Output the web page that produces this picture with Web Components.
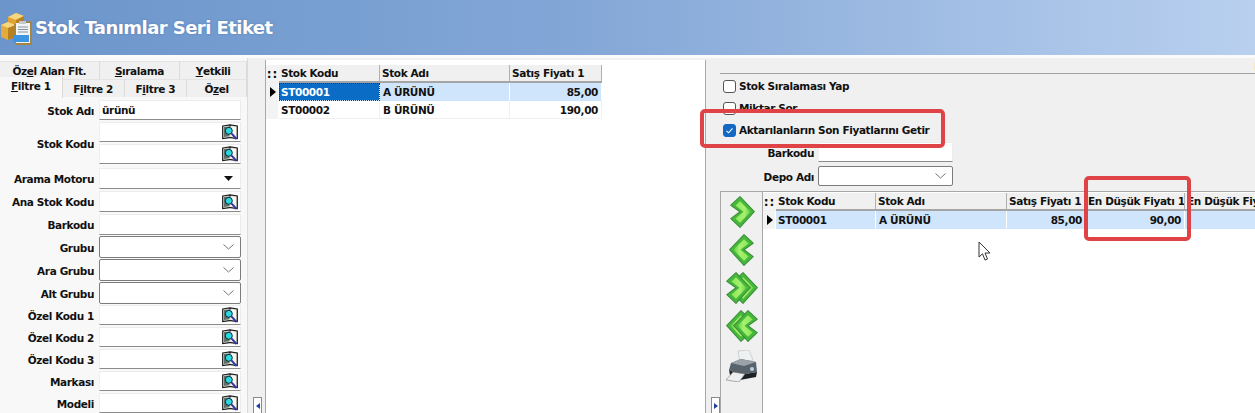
<!DOCTYPE html>
<html lang="tr">
<head>
<meta charset="utf-8">
<title>Stok Tanımlar Seri Etiket</title>
<style>
  html, body { margin: 0; height: 413px; overflow: hidden; background: #f0f0f0; }
  body {
    font: bold 10.5px "DejaVu Sans", sans-serif;
    letter-spacing: -0.38px;
    color: #111;
    display: flex;
    flex-direction: column;
    position: relative;
  }
</style>
</head>
<body>
<title-bar>Stok Tanımlar Seri Etiket</title-bar>
<main-layout>
  <filter-panel slot="left"></filter-panel>
  <data-grid slot="middle" marker="13" cols="101 130 92"
    heads="Stok Kodu|Stok Adı|Satış Fiyatı 1"
    rows="ST00001|A ÜRÜNÜ|85,00;ST00002|B ÜRÜNÜ|190,00"
    num="2" focus></data-grid>
  <transfer-panel slot="right"></transfer-panel>
</main-layout>
<red-frame style="left:700px;top:109px;width:245px;height:39px"></red-frame>
<red-frame style="left:1084px;top:176px;width:107px;height:65px"></red-frame>
<mouse-pointer style="left:978px;top:241px"></mouse-pointer>

<script>
const lookupIcon = `<svg width="16" height="16" viewBox="0 0 16 16">
  <path d="M.7 2 L7.5 1 L8 2 L8.5 1 L15.3 2 V14.6 L8.5 13.6 H7.5 L.7 14.6 Z" fill="#e4e4dc" stroke="#1a1a1a" stroke-width="1.2"/>
  <path d="M2 3 L7.4 2.4 V12.2 L2 13 Z" fill="#5f6f68"/>
  <path d="M14 3.2 L9 2.5 V12.2 L14 13 Z" fill="#f6f6f0"/>
  <circle cx="6.8" cy="6.8" r="3.5" fill="#2bd8e0" stroke="#0e2a3a" stroke-width="1"/>
  <path d="M9.4 9.4 L14.5 15" stroke="#3535a5" stroke-width="2"/>
</svg>`;

class TitleBar extends HTMLElement {
  constructor() {
    super();
    this.attachShadow({ mode: 'open' }).innerHTML = `<style>
      :host {
        display: flex;
        align-items: center;
        flex: none;
        height: 55px;
        padding-left: 1px;
        gap: 3px;
        background: linear-gradient(90deg, #6b95cb 0%, #82a6d6 45%, #b9d0ef 100%);
        border-bottom: 3px solid #fbfbfb;
      }
      .name {
        font: bold 18px "DejaVu Sans", sans-serif;
        letter-spacing: -0.55px;
        color: #fff;
        margin-top: -1px;
        text-shadow: 0 0 2px rgba(60,90,140,.5);
      }
      svg { margin-top: 2px; }
    </style>
    <svg width="31" height="32" viewBox="0 0 31 32">
      <path d="M7 4 L15 0 L23 3 V15 L14 19 L7 15 Z" fill="#dfa233"/>
      <path d="M7 4 L15 0 L23 3 L15 7 Z" fill="#f6d67e"/>
      <path d="M15 7 L23 3 V15 L15 19 Z" fill="#b9801f"/>
      <path d="M0 12 L7 9 L15 12 V24 L7 27 L0 24 Z" fill="#e3ab3b"/>
      <path d="M0 12 L7 9 L15 12 L7 15 Z" fill="#f6d67e"/>
      <path d="M7 15 L15 12 V24 L7 27 Z" fill="#b9801f"/>
      <path d="M13 11 L29 8 L31 9 V32 H14 Z" fill="#a5853f"/>
      <rect x="15" y="10" width="14" height="20" fill="#f1f3f5"/>
      <rect x="18" y="8" width="7" height="3" fill="#c3c9d0"/>
      <path d="M17 14 H27 M17 16.5 H27 M17 19 H27" stroke="#8593a1" stroke-width="1"/>
      <rect x="12" y="22" width="16" height="7" fill="#3a96e3"/>
    </svg>
    <span class="name"><slot></slot></span>`;
  }
}

class MainLayout extends HTMLElement {
  constructor() {
    super();
    this.attachShadow({ mode: 'open' }).innerHTML = `<style>
      :host { display: flex; flex: 1; min-height: 0; }
      .left { width: 248px; flex: none; padding-top: 1px; background: #f8f8f8; border-right: 1px solid #dcdcdc; box-sizing: border-box; overflow: hidden; }
      .gutter { width: 17px; flex: none; display: flex; flex-direction: column; justify-content: flex-end; padding-left: 5px; box-sizing: border-box; }
      .middle { width: 441px; flex: none; margin-top: 2px; background: #fff; border: 1px solid #a8a8a8; border-width: 0 1px; box-sizing: border-box; padding-top: 5px; }
      .gutter2 { width: 14px; flex: none; display: flex; flex-direction: column; justify-content: flex-end; padding-left: 5px; box-sizing: border-box; }
      .right { flex: 1; min-width: 0; overflow: hidden; padding-top: 1px; }
      .nudge { width: 9px; height: 16px; box-sizing: border-box; background: #fff; border: 1px solid #8a8a8a; border-bottom: 0; display: flex; align-items: center; justify-content: center; }
      .nudge i { border: 3px solid transparent; }
      .l i { border-right: 4px solid #1f3fa0; border-left: 0; }
      .r i { border-left: 4px solid #1f3fa0; border-right: 0; }
    </style>
    <div class="left"><slot name="left"></slot></div>
    <div class="gutter"><div class="nudge l"><i></i></div></div>
    <div class="middle"><slot name="middle"></slot></div>
    <div class="gutter2"><div class="nudge r"><i></i></div></div>
    <div class="right"><slot name="right"></slot></div>`;
  }
}

class TabStrip extends HTMLElement {
  constructor() {
    super();
    this.attachShadow({ mode: 'open' }).innerHTML = `<style>
      :host { display: flex; height: 18px; background: #f0f0f0; }
      span {
        display: flex; align-items: center; justify-content: center;
        box-sizing: border-box; height: 100%;
        border-right: 1px solid #dadada; border-top: 1px solid #e4e4e4;
      }
      span.on { background: #f8f8f8; height: 21px; margin-top: -2px; border-top: 0; padding-bottom: 4px; position: relative; z-index: 1; }
      u { text-decoration-thickness: 1px; }
    </style>`;
    const tabs = JSON.parse(this.getAttribute('tabs'));
    for (const [html, width, on] of tabs) {
      const tab = document.createElement('span');
      tab.innerHTML = html;
      tab.style.width = width + 'px';
      if (on) tab.classList.add('on');
      this.shadowRoot.appendChild(tab);
    }
  }
}

class FieldBox extends HTMLElement {
  constructor() {
    super();
    const kind = this.getAttribute('kind') || 'text';
    let tail = '';
    if (kind === 'lookup') tail = lookupIcon;
    if (kind === 'combo') tail = `<svg width="11" height="6" viewBox="0 0 11 6"><path d="M.5 .5 L5.5 5 L10.5 .5" fill="none" stroke="#777"/></svg>`;
    if (kind === 'drop') tail = `<svg width="9" height="5" viewBox="0 0 9 5"><path d="M0 0 H9 L4.5 5 Z" fill="#111"/></svg>`;
    this.attachShadow({ mode: 'open' }).innerHTML = `<style>
      :host {
        display: flex; align-items: center; justify-content: space-between;
        box-sizing: border-box; width: var(--box-w, 142px); height: var(--box-h, 21px);
        background: #fff; padding: 0 2px 0 2px;
        border-top: 1px solid #ececec; border-left: 1px solid #f0f0f0; border-right: 1px solid #ececec;
        border-bottom: 1px solid #8c8c8c;
      }
      :host([kind="combo"]) { border: 1px solid #7c7c7c; border-radius: 2px; padding-right: 6px; }
      :host([kind="drop"]) { padding-right: 7px; }
    </style><span><slot></slot></span>${tail}`;
  }
}

class FieldRow extends HTMLElement {
  constructor() {
    super();
    this.attachShadow({ mode: 'open' }).innerHTML = `<style>
      :host { display: flex; align-items: center; gap: var(--label-gap, 5px); margin-bottom: var(--row-gap, 2px); }
      label { width: var(--label-w, 94px); flex: none; text-align: right; padding-top: 1px; }
      .boxes { display: flex; flex-direction: column; gap: 2px; }
    </style>
    <label>${this.getAttribute('label')}</label>
    <div class="boxes"><slot></slot></div>`;
  }
}

class FilterPanel extends HTMLElement {
  constructor() {
    super();
    const row = (label, kind, height, gap, value = '') =>
      `<field-row label="${label}" style="--box-h:${height}px;--row-gap:${gap}px"><field-box kind="${kind}">${value}</field-box></field-row>`;
    this.attachShadow({ mode: 'open' }).innerHTML = `<style>
      :host { display: block; }
      .tabs { padding-top: 2px; }
      .rows { padding-top: 3px; }
    </style>
    <div class="tabs">
      <tab-strip tabs='[["Öz<u>e</u>l Alan Flt.",100],["<u>S</u>ıralama",81],["<u>Y</u>etkili",67]]'></tab-strip>
      <tab-strip tabs='[["<u>F</u>iltre 1",63,1],["F<u>i</u>ltre 2",62],["F<u>i</u>ltre 3",63],["Ö<u>z</u>el",60]]'></tab-strip>
    </div>
    <div class="rows">
      ${row('Stok Adı', 'text', 20, 2, 'ürünü')}
      <field-row label="Stok Kodu" style="--box-h:20px;--row-gap:4px"><field-box kind="lookup"></field-box><field-box kind="lookup"></field-box></field-row>
      ${row('Arama Motoru', 'drop', 21, 2)}
      ${row('Ana Stok Kodu', 'lookup', 21, 2)}
      ${row('Barkodu', 'text', 21, 1)}
      ${row('Grubu', 'combo', 22, 1)}
      ${row('Ara Grubu', 'combo', 22, 1)}
      ${row('Alt Grubu', 'combo', 22, 1)}
      ${row('Özel Kodu 1', 'lookup', 20, 2)}
      ${row('Özel Kodu 2', 'lookup', 20, 2)}
      ${row('Özel Kodu 3', 'lookup', 20, 2)}
      ${row('Markası', 'lookup', 20, 2)}
      ${row('Modeli', 'lookup', 20, 2)}
    </div>`;
  }
}

class DataGrid extends HTMLElement {
  constructor() {
    super();
    const cols = this.getAttribute('cols').split(' ');
    const marker = this.getAttribute('marker');
    const heads = this.getAttribute('heads').split('|');
    const rows = this.getAttribute('rows').split(';').map(r => r.split('|'));
    const nums = (this.getAttribute('num') || '').split(' ').map(Number);
    const focus = this.hasAttribute('focus');

    let cells = `<div class="h m">::</div>` + heads.map(h => `<div class="h">${h}</div>`).join('');
    rows.forEach((row, r) => {
      cells += `<div class="m ${r === 0 ? 'tri' : ''}"></div>`;
      row.forEach((text, c) => {
        const cls = ['c'];
        if (r === 0) cls.push('sel');
        if (r === 0 && c === 0 && focus) cls.push('focus');
        if (nums.includes(c)) cls.push('n');
        cells += `<div class="${cls.join(' ')}">${text}</div>`;
      });
    });

    this.attachShadow({ mode: 'open' }).innerHTML = `<style>
      :host { display: block; overflow: hidden; }
      .grid {
        display: grid;
        grid-template-columns: ${marker}px ${cols.map(c => c + 'px').join(' ')};
        grid-auto-rows: 18px;
        width: max-content;
        white-space: nowrap;
      }
      .h {
        background: #f0f0f0; border-right: 1px solid #b0b0b0; border-bottom: 2px solid #a4a4a4;
        padding-left: 2px; display: flex; align-items: center; overflow: hidden; box-sizing: border-box;
      }
      .h.m { padding: 0; justify-content: center; letter-spacing: 1px; border: 0; border-bottom: 1px solid #f0f0f0; font-size: 12px; }
      .m { background: #f3f3f3; border-right: 1px solid #fff; box-sizing: border-box; position: relative; }
      .tri::after {
        content: ""; position: absolute; left: 4px; top: 4px;
        border: 5px solid transparent; border-left: 6px solid #000; border-right: 0;
      }
      .c {
        display: flex; align-items: center; padding: 1px 2px 0 2px; box-sizing: border-box; overflow: hidden;
        border-right: 1px solid #f0f0f0; border-bottom: 1px solid #f0f0f0;
      }
      .c + .c { padding-left: 3px; }
      .sel { background: #cfe5fb; border-right-color: #fff; border-bottom-color: #cfe5fb; }
      .focus { background: #0a6cc4; color: #fff; outline: 1px dotted #333; outline-offset: -1px; }
      .n { justify-content: flex-end; padding-right: 3px; }
    </style><div class="grid">${cells}</div>`;
  }
}

class CheckRow extends HTMLElement {
  constructor() {
    super();
    this.attachShadow({ mode: 'open' }).innerHTML = `<style>
      :host { display: flex; align-items: center; gap: 3px; height: 22px; padding-left: 3px; }
      i { box-sizing: border-box; width: 13px; height: 13px; border: 1px solid #555; border-radius: 3px; background: #fff; display: flex; }
      :host([checked]) i { background: #1268c3; border-color: #1268c3; }
      svg { display: none; }
      :host([checked]) svg { display: block; }
    </style>
    <i><svg width="11" height="11" viewBox="0 0 11 11"><path d="M2.5 5.8 L4.6 7.8 L8.5 3.4" fill="none" stroke="#fff" stroke-width="1.1"/></svg></i>
    <span><slot></slot></span>`;
  }
}

class NavArrow extends HTMLElement {
  constructor() {
    super();
    const kind = this.getAttribute('kind');
    const id = 'g' + kind;
    // one chevron: dark rim, mid green body, bright band along its middle
    const right = (x) => `<g transform="translate(${x} 0)">
      <path d="M.8 9.2 L10 .7 L24.3 15.7 L10 31.3 L.8 22.6 L10 15.7 Z" fill="#46b83a" stroke="#3b8f3a" stroke-width="1.1" stroke-linejoin="round"/>
      <path d="M5.5 9.4 L10 5.2 L20.4 15.7 L10 26.8 L5.5 22.4 L13.5 15.7 Z" fill="url(#${id})"/>
    </g>`;
    let body = right(0);
    let width = 26;
    if (kind === 'double' || kind === 'double-left') { body = right(7) + right(0); width = 32; }
    const flip = kind === 'left' || kind === 'double-left';
    this.attachShadow({ mode: 'open' }).innerHTML = `<style>
      :host { display: flex; justify-content: center; height: 32px; }
      :host([kind="right"]) svg { margin-left: 2px; }
      :host([kind="left"]) svg { margin-left: -2px; }
    </style>
    <svg width="${width}" height="32" viewBox="0 0 ${width} 32">
      <defs><linearGradient id="${id}" x1="0" y1="0" x2="1" y2="0">
        <stop offset="0" stop-color="#8ce85a"/><stop offset=".6" stop-color="#a8f070"/><stop offset="1" stop-color="#62d244"/>
      </linearGradient></defs>
      <g ${flip ? `transform="translate(${width} 0) scale(-1 1)"` : ''}>${body}</g>
    </svg>`;
  }
}

class PrinterIcon extends HTMLElement {
  constructor() {
    super();
    this.attachShadow({ mode: 'open' }).innerHTML = `<style>
      :host { display: flex; justify-content: center; }
    </style>
    <svg width="32" height="32" viewBox="0 0 32 32">
      <path d="M12 1 L23 0 L27 10 L14 14 Z" fill="#eef1f2" stroke="#b8bcc0" stroke-width=".6"/>
      <path d="M5 13 L15 9 L30 12 L31 22 L14 25 L3 20 Z" fill="#59636b"/>
      <path d="M5 13 L15 9 L30 12 L18 16 Z" fill="#9aa3a9"/>
      <path d="M3 20 L14 25 L31 22 L30 27 L14 30 L4 25 Z" fill="#1d2226"/>
      <path d="M0 30 L7 22 L19 24 L13 32 Z" fill="#eceeef" stroke="#666" stroke-width=".5"/>
      <circle cx="26" cy="19" r="2" fill="#bcd0dc"/>
    </svg>`;
  }
}

class TransferPanel extends HTMLElement {
  constructor() {
    super();
    this.attachShadow({ mode: 'open' }).innerHTML = `<style>
      :host { display: block; --label-w: 94px; --label-gap: 4px; --box-w: 135px; --box-h: 20px; --row-gap: 4px; }
      .strip { height: 15px; box-sizing: border-box; border-bottom: 1px solid #a4a4a4; text-align: right; line-height: 17px; overflow: hidden; margin-right: -6px; }
      .fields { display: flex; flex-direction: column; padding-top: 1px; padding-bottom: 1px; }
      .low { display: flex; height: 222px; border-top: 1px solid #a8a8a8; border-left: 1px solid #a8a8a8; }
      .tools { width: 42px; flex: none; box-sizing: border-box; border-right: 1px solid #a8a8a8; padding-top: 4px; display: flex; flex-direction: column; gap: 6px; }
      .tools printer-icon { margin-top: 2px; }
      .table { flex: 1; min-width: 0; background: #fff; padding-top: 1px; overflow: hidden; }
      check-row:first-of-type { margin-top: 1px; }
    </style>
    <div class="strip">E</div>
    <check-row>Stok Sıralaması Yap</check-row>
    <check-row>Miktar Sor</check-row>
    <check-row checked>Aktarılanların Son Fiyatlarını Getir</check-row>
    <div class="fields">
      <field-row label="Barkodu"><field-box kind="text"></field-box></field-row>
      <field-row label="Depo Adı"><field-box kind="combo"></field-box></field-row>
    </div>
    <div class="low">
      <div class="tools">
        <nav-arrow kind="right"></nav-arrow>
        <nav-arrow kind="left"></nav-arrow>
        <nav-arrow kind="double"></nav-arrow>
        <nav-arrow kind="double-left"></nav-arrow>
        <printer-icon></printer-icon>
      </div>
      <div class="table">
        <data-grid marker="13" cols="100 131 79 99 120"
          heads="Stok Kodu|Stok Adı|Satış Fiyatı 1|En Düşük Fiyatı 1|En Düşük Fiyatı 2"
          rows="ST00001|A ÜRÜNÜ|85,00|90,00|"
          num="2 3"></data-grid>
      </div>
    </div>`;
  }
}

class RedFrame extends HTMLElement {
  constructor() {
    super();
    this.attachShadow({ mode: 'open' }).innerHTML = `<style>
      :host { position: absolute; box-sizing: border-box; border: 4px solid #e04345; border-radius: 5px; }
    </style>`;
  }
}

class MousePointer extends HTMLElement {
  constructor() {
    super();
    this.attachShadow({ mode: 'open' }).innerHTML = `<style>
      :host { position: absolute; width: 14px; height: 21px; }
    </style>
    <svg width="14" height="21" viewBox="0 0 14 21">
      <path d="M1 1 V16 L4.5 12.8 L7 19 L9.5 18 L7 12 L12 12 Z" fill="#fff" stroke="#333" stroke-width="1"/>
    </svg>`;
  }
}

customElements.define('title-bar', TitleBar);
customElements.define('main-layout', MainLayout);
customElements.define('tab-strip', TabStrip);
customElements.define('field-box', FieldBox);
customElements.define('field-row', FieldRow);
customElements.define('filter-panel', FilterPanel);
customElements.define('data-grid', DataGrid);
customElements.define('check-row', CheckRow);
customElements.define('nav-arrow', NavArrow);
customElements.define('printer-icon', PrinterIcon);
customElements.define('transfer-panel', TransferPanel);
customElements.define('red-frame', RedFrame);
customElements.define('mouse-pointer', MousePointer);
</script>
</body>
</html>
